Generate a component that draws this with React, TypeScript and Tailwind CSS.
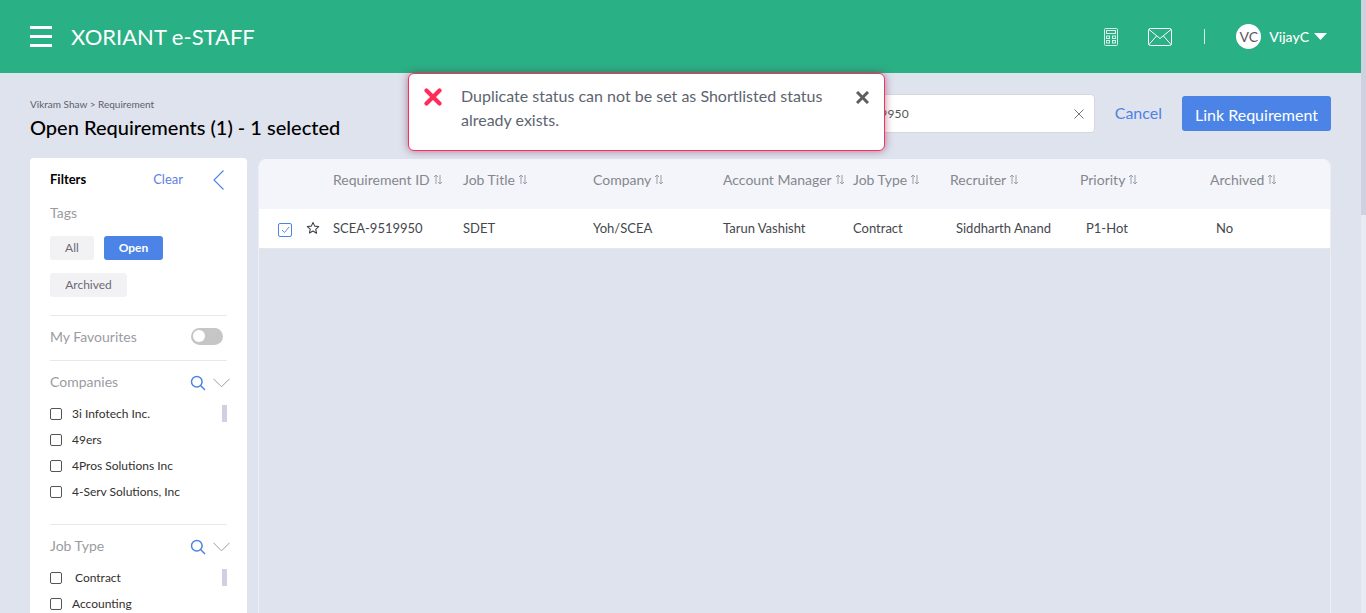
import React from "react";

const SortIcon = () => (
  <svg width="10" height="11" viewBox="0 0 10 11" fill="none" stroke="#9a9ea6" strokeWidth="1" className="ml-[3px] shrink-0">
    <path d="M3 10V1M1 3l2-2 2 2" />
    <path d="M7 1v9M5 8l2 2 2-2" />
  </svg>
);

const Search = () => (
  <svg width="16" height="16" viewBox="0 0 16 16" fill="none" stroke="#4a84e4" strokeWidth="1.5" className="mt-[3px]">
    <circle cx="6.8" cy="6.8" r="5.3" />
    <path d="M10.8 10.8L15 15" />
  </svg>
);

const Chevron = () => (
  <svg width="17" height="10" viewBox="0 0 17 10" fill="none" stroke="#9a9ea6" strokeWidth="1" className="mt-[3px]">
    <path d="M0.5 0.8L8.5 8.8L16.5 0.8" />
  </svg>
);

const Check = ({ label, extra }: { label: string; extra?: string }) => (
  <div className="flex items-center h-[26px]">
    <span className="w-[12px] h-[12px] border border-[#555] rounded-[2px] shrink-0 bg-white" />
    <span className={"ml-[10px] text-[12px] text-[#33302e] " + (extra ?? "")}>{label}</span>
  </div>
);

const headers: [string, string][] = [
  ["Requirement ID", "w-[130px]"],
  ["Job Title", "w-[130px]"],
  ["Company", "w-[130px]"],
  ["Account Manager", "w-[130px]"],
  ["Job Type", "w-[97px]"],
  ["Recruiter", "w-[130px]"],
  ["Priority", "w-[130px]"],
  ["Archived", "w-[110px]"],
];

const cells: [string, string][] = [
  ["SCEA-9519950", "w-[130px]"],
  ["SDET", "w-[130px]"],
  ["Yoh/SCEA", "w-[130px]"],
  ["Tarun Vashisht", "w-[130px]"],
  ["Contract", "w-[97px]"],
  ["Siddharth Anand", "w-[130px] pl-[6px]"],
  ["P1-Hot", "w-[130px] pl-[6px]"],
  ["No", "w-[110px] pl-[6px]"],
];

export default function App() {
  return (
    <div className="relative flex h-[613px] overflow-hidden bg-[#dfe3ee] font-['Lato',sans-serif]">
      <div className="w-[1361px] shrink-0 flex flex-col">
        <header className="h-[73px] shrink-0 bg-[#2ab085] flex items-center pl-[30px] pr-[34px] text-white">
          <div className="flex flex-col gap-[6px] w-[22px]">
            <span className="h-[3px] bg-white" />
            <span className="h-[3px] bg-white" />
            <span className="h-[3px] bg-white" />
          </div>
          <span className="ml-[19px] text-[22px] leading-none">XORIANT e-STAFF</span>
          <div className="ml-auto flex items-center">
            <svg width="14" height="18" viewBox="0 0 14 18" fill="none" stroke="#d6f1e7" strokeWidth="1">
              <rect x="0.5" y="0.5" width="13" height="17" rx="1" />
              <rect x="2.5" y="2.5" width="9" height="3" />
              <rect x="2.5" y="8" width="3" height="2.5" />
              <rect x="8.5" y="8" width="3" height="2.5" />
              <rect x="2.5" y="12.5" width="3" height="2.5" />
              <rect x="8.5" y="12.5" width="3" height="2.5" />
            </svg>
            <svg width="24" height="18" viewBox="0 0 24 18" fill="none" stroke="#ffffff" strokeWidth="1" className="ml-[30px]">
              <rect x="0.5" y="0.5" width="23" height="17" rx="2" />
              <path d="M1 1.5L12 10.5L23 1.5M1 16.5L8.5 8M23 16.5L15.5 8" />
            </svg>
            <span className="ml-[32px] w-[1px] h-[15px] bg-[#d6f1e7]" />
            <span className="ml-[31px] w-[25px] h-[25px] rounded-full bg-white text-[#5c5560] text-[14px] flex items-center justify-center">VC</span>
            <span className="ml-[8px] text-[14px] font-medium">VijayC</span>
            <svg width="13" height="7" viewBox="0 0 13 7" fill="#ffffff" className="ml-[5px]">
              <path d="M0 0h13L6.5 7z" />
            </svg>
          </div>
        </header>

        <div className="flex-1 min-h-0 flex flex-col pl-[30px] pr-[30px]">
          <div className="h-[85px] shrink-0 flex">
            <div className="pt-[25px]">
              <div className="text-[10px] leading-[12px] text-[#5d6068]">Vikram Shaw &gt; Requirement</div>
              <div className="mt-[4px] text-[20px] leading-[26px] font-medium text-black">Open Requirements (1) - 1 selected</div>
            </div>
            <div className="ml-auto flex items-start">
              <div className="mt-[21px] w-[275px] h-[39px] bg-white border border-[#d5d7dc] rounded-[4px] flex items-center pl-[3px] pr-[10px]">
                <span className="text-[12px] text-[#555] tracking-[0.2px]">SCEA-9519950</span>
                <svg width="10" height="10" viewBox="0 0 10 10" stroke="#777" strokeWidth="1" className="ml-auto">
                  <path d="M0.5 0.5l9 9M9.5 0.5l-9 9" />
                </svg>
              </div>
              <span className="ml-[20px] mt-[30px] text-[16px] leading-[20px] text-[#4d82e4]">Cancel</span>
              <button className="ml-[20px] mt-[23px] w-[149px] h-[35px] pt-[2px] bg-[#4b84e6] rounded-[3px] text-white text-[16px]">Link Requirement</button>
            </div>
          </div>

          <div className="flex-1 min-h-0 flex gap-[11px]">
            <aside className="w-[217px] shrink-0 bg-white rounded-t-[4px] pl-[20px] pr-[20px] overflow-hidden">
              <div className="flex items-center h-[43px]">
                <span className="text-[13px] font-bold text-black">Filters</span>
                <span className="ml-auto text-[13px] text-[#5f7fe0]">Clear</span>
                <svg width="11" height="20" viewBox="0 0 11 20" fill="none" stroke="#4a84e4" strokeWidth="1.1" className="ml-[30px] mr-[3px]">
                  <path d="M10.5 0.5L1 10L10.5 19.5" />
                </svg>
              </div>
              <div className="text-[14px] leading-[20px] text-[#9a9ca2] mt-[2px]">Tags</div>
              <div className="mt-[13px] flex gap-[10px]">
                <span className="w-[44px] h-[24px] bg-[#f2f2f5] rounded-[3px] text-[12px] text-[#6c6a75] flex items-center justify-center">All</span>
                <span className="w-[59px] h-[24px] bg-[#4b84e6] rounded-[3px] text-[12px] font-bold text-white flex items-center justify-center">Open</span>
              </div>
              <span className="mt-[13px] w-[77px] h-[24px] bg-[#f2f2f5] rounded-[3px] text-[12px] text-[#6c6a75] flex items-center justify-center">Archived</span>
              <div className="mt-[18px] border-t border-[#e7e8ee] h-[45px] flex items-center pb-[4px]">
                <span className="text-[14px] text-[#9a9ca2]">My Favourites</span>
                <span className="ml-auto mr-[4px] w-[32px] h-[17px] rounded-full bg-[#c6c6c6] flex items-center pl-[2px]">
                  <span className="w-[12px] h-[12px] rounded-full bg-white" />
                </span>
              </div>
              <div className="border-t border-[#e7e8ee] pt-[10px] h-[164px]">
                <div className="flex items-center h-[20px]">
                  <span className="text-[14px] text-[#9a9ca2]">Companies</span>
                  <span className="ml-auto"><Search /></span>
                  <span className="ml-[7px] mr-[-3px]"><Chevron /></span>
                </div>
                <div className="relative mt-[10px]">
                  <span className="absolute right-0 top-[4px] w-[5px] h-[17px] bg-[#cfd1e2]" />
                  <Check label="3i Infotech Inc." />
                  <Check label="49ers" />
                  <Check label="4Pros Solutions Inc" />
                  <Check label="4-Serv Solutions, Inc" />
                </div>
              </div>
              <div className="border-t border-[#e7e8ee] pt-[10px]">
                <div className="flex items-center h-[20px]">
                  <span className="text-[14px] text-[#9a9ca2]">Job Type</span>
                  <span className="ml-auto"><Search /></span>
                  <span className="ml-[7px] mr-[-3px]"><Chevron /></span>
                </div>
                <div className="relative mt-[10px]">
                  <span className="absolute right-0 top-[4px] w-[5px] h-[17px] bg-[#cfd1e2]" />
                  <Check label="Contract" extra="pl-[3px]" />
                  <Check label="Accounting" />
                </div>
              </div>
            </aside>

            <section className="flex-1 min-w-0 border-x border-[#eceef5] rounded-t-[8px] overflow-hidden mt-[1px]">
              <div className="h-[50px] bg-[#f3f5fa] flex items-center pl-[74px] pb-[9px]">
                {headers.map(([t, w]) => (
                  <div key={t} className={w + " flex items-center text-[14px] text-[#85878d] whitespace-nowrap"}>
                    {t}
                    <SortIcon />
                  </div>
                ))}
              </div>
              <div className="h-[40px] pt-[1px] bg-white border-b border-[#e4e6ee] flex items-center text-[13px] text-[#45474d] whitespace-nowrap">
                <span className="ml-[19px] w-[14px] h-[14px] border border-[#4a84e4] rounded-[2px] flex items-center justify-center shrink-0 mt-[2px]">
                  <svg width="9" height="8" viewBox="0 0 9 8" fill="none" stroke="#4a84e4" strokeWidth="0.9">
                    <path d="M1 4l2.5 2.5L8 1" />
                  </svg>
                </span>
                <svg width="14" height="14" viewBox="0 0 24 24" fill="none" stroke="#3d3f45" strokeWidth="1.8" strokeLinejoin="round" className="ml-[14px] shrink-0 mr-[13px] mb-[2px]">
                  <path d="M12 2.5l2.9 6.3 6.9.8-5.1 4.7 1.4 6.8L12 17.1l-6.1 3.5 1.4-6.8L2.2 9.6l6.9-.8z" />
                </svg>
                {cells.map(([t, w]) => (
                  <div key={t} className={w}>{t}</div>
                ))}
              </div>
            </section>
          </div>
        </div>
      </div>

      <div className="w-[5px] shrink-0 bg-[#e9ebf4]">
        <div className="h-[215px] bg-[#cfd1e0]" />
      </div>

      <div className="absolute left-[408px] top-[73px] w-[477px] h-[78px] bg-white border border-[#ff2d5a] rounded-[6px] shadow-[0_0_9px_rgba(110,30,70,0.55)] flex items-start pl-[15px] pr-[15px] pt-[10px]">
        <svg width="18" height="18" viewBox="0 0 18 18" stroke="#ff2d5a" strokeWidth="4.2" strokeLinecap="round" className="mt-[4px] shrink-0">
          <path d="M2.5 2.5l13 13M15.5 2.5l-13 13" />
        </svg>
        <div className="ml-[19px] text-[16px] leading-[24px] text-[#5d6470] w-[375px]">
          Duplicate status can not be set as Shortlisted status already exists.
        </div>
        <svg width="13" height="13" viewBox="0 0 13 13" stroke="#5f5f5f" strokeWidth="3" className="ml-auto mt-[7px] shrink-0">
          <path d="M1 1l11 11M12 1L1 12" />
        </svg>
      </div>
    </div>
  );
}
